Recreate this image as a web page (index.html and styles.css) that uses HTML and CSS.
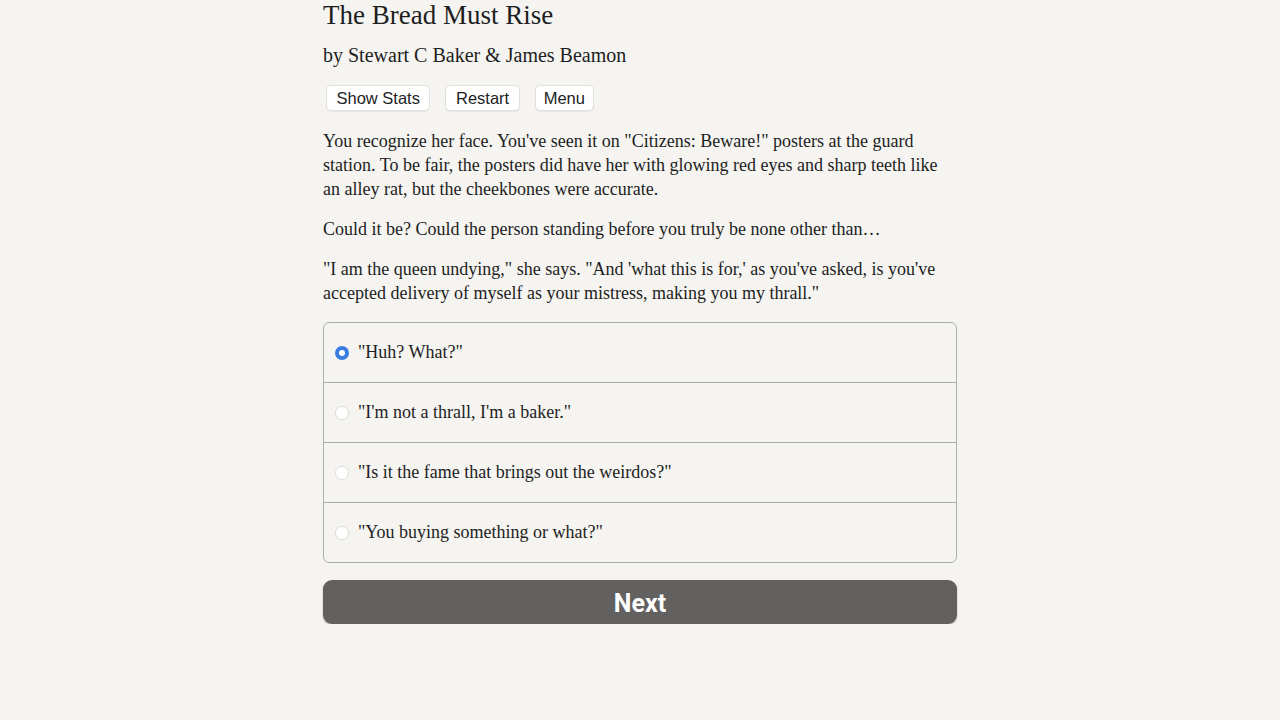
FILE: index.html
```html
<!DOCTYPE html>
<html lang="en">
<head>
<meta charset="utf-8">
<title>The Bread Must Rise</title>
<link rel="stylesheet" href="styles.css">
</head>
<body>
<main class="container">
  <h1 class="title">The Bread Must Rise</h1>
  <h2 class="byline">by Stewart C Baker &amp; James Beamon</h2>
  <div class="buttons">
    <button class="btn">Show Stats</button>
    <button class="btn">Restart</button>
    <button class="btn">Menu</button>
  </div>
  <div class="text">
    <p>You recognize her face. You've seen it on "Citizens: Beware!" posters at the guard station. To be fair, the posters did have her with glowing red eyes and sharp teeth like an alley rat, but the cheekbones were accurate.</p>
    <p>Could it be? Could the person standing before you truly be none other than…</p>
    <p>"I am the queen undying," she says. "And 'what this is for,' as you've asked, is you've accepted delivery of myself as your mistress, making you my thrall."</p>
  </div>
  <form class="choices">
    <label class="choice"><span class="radio checked"></span><span>"Huh? What?"</span></label>
    <label class="choice"><span class="radio"></span><span>"I'm not a thrall, I'm a baker."</span></label>
    <label class="choice"><span class="radio"></span><span>"Is it the fame that brings out the weirdos?"</span></label>
    <label class="choice"><span class="radio"></span><span>"You buying something or what?"</span></label>
  </form>
  <button class="next">Next</button>
</main>
</body>
</html>
```
FILE: styles.css
```css
html, body {
  margin: 0;
  padding: 0;
  background: #f5f4f1;
}
body {
  font-family: "Liberation Serif", "Times New Roman", serif;
  color: #222;
}
.container {
  width: 634px;
  margin: 0 auto;
}
.title {
  margin: 0;
  font-weight: normal;
  font-size: 27px;
  line-height: 30px;
  color: #1e1e1e;
}
.byline {
  margin: 13px 0 0;
  font-weight: normal;
  font-size: 20px;
  line-height: 24px;
  color: #1e1e1e;
}
.buttons {
  display: flex;
  gap: 15px;
  margin: 18px 0 0 3px;
}
.btn {
  font-family: "Liberation Sans", Arial, sans-serif;
  font-size: 16.5px;
  color: #222;
  background: #fff;
  border: 1px solid #e2e0dc;
  border-radius: 5px;
  height: 26px;
  padding: 0 9.5px;
  box-shadow: 0 1px 1px rgba(0,0,0,0.06);
}
.btn:last-child {
  padding: 0 8px;
}
.text {
  margin-top: 18px;
  font-size: 18px;
  line-height: 24px;
  color: #1e1e1e;
}
.text p {
  margin: 0 0 16px;
}
.choices {
  margin-top: 17px;
  border: 1px solid #acacac;
  border-radius: 6px;
  display: flex;
  flex-direction: column;
}
.choice {
  display: flex;
  align-items: center;
  gap: 9px;
  height: 59px;
  padding-left: 11px;
  font-size: 18px;
  color: #1e1e1e;
}
.choice + .choice {
  border-top: 1px solid #acacac;
}
.radio {
  box-sizing: border-box;
  width: 14px;
  height: 14px;
  border-radius: 50%;
  border: 1px solid #dcdcdc;
  background: #fff;
}
.radio.checked {
  border: 4px solid #3a7de0;
}
.next {
  display: block;
  width: 100%;
  margin-top: 17px;
  height: 44px;
  border: none;
  border-radius: 9px;
  background: #626160;
  color: #fff;
  font-family: Roboto, "Liberation Sans", sans-serif;
  font-weight: bold;
  font-size: 25px;
  padding-top: 3px;
  box-shadow: 0 1px 2px rgba(0,0,0,0.25);
}
```
